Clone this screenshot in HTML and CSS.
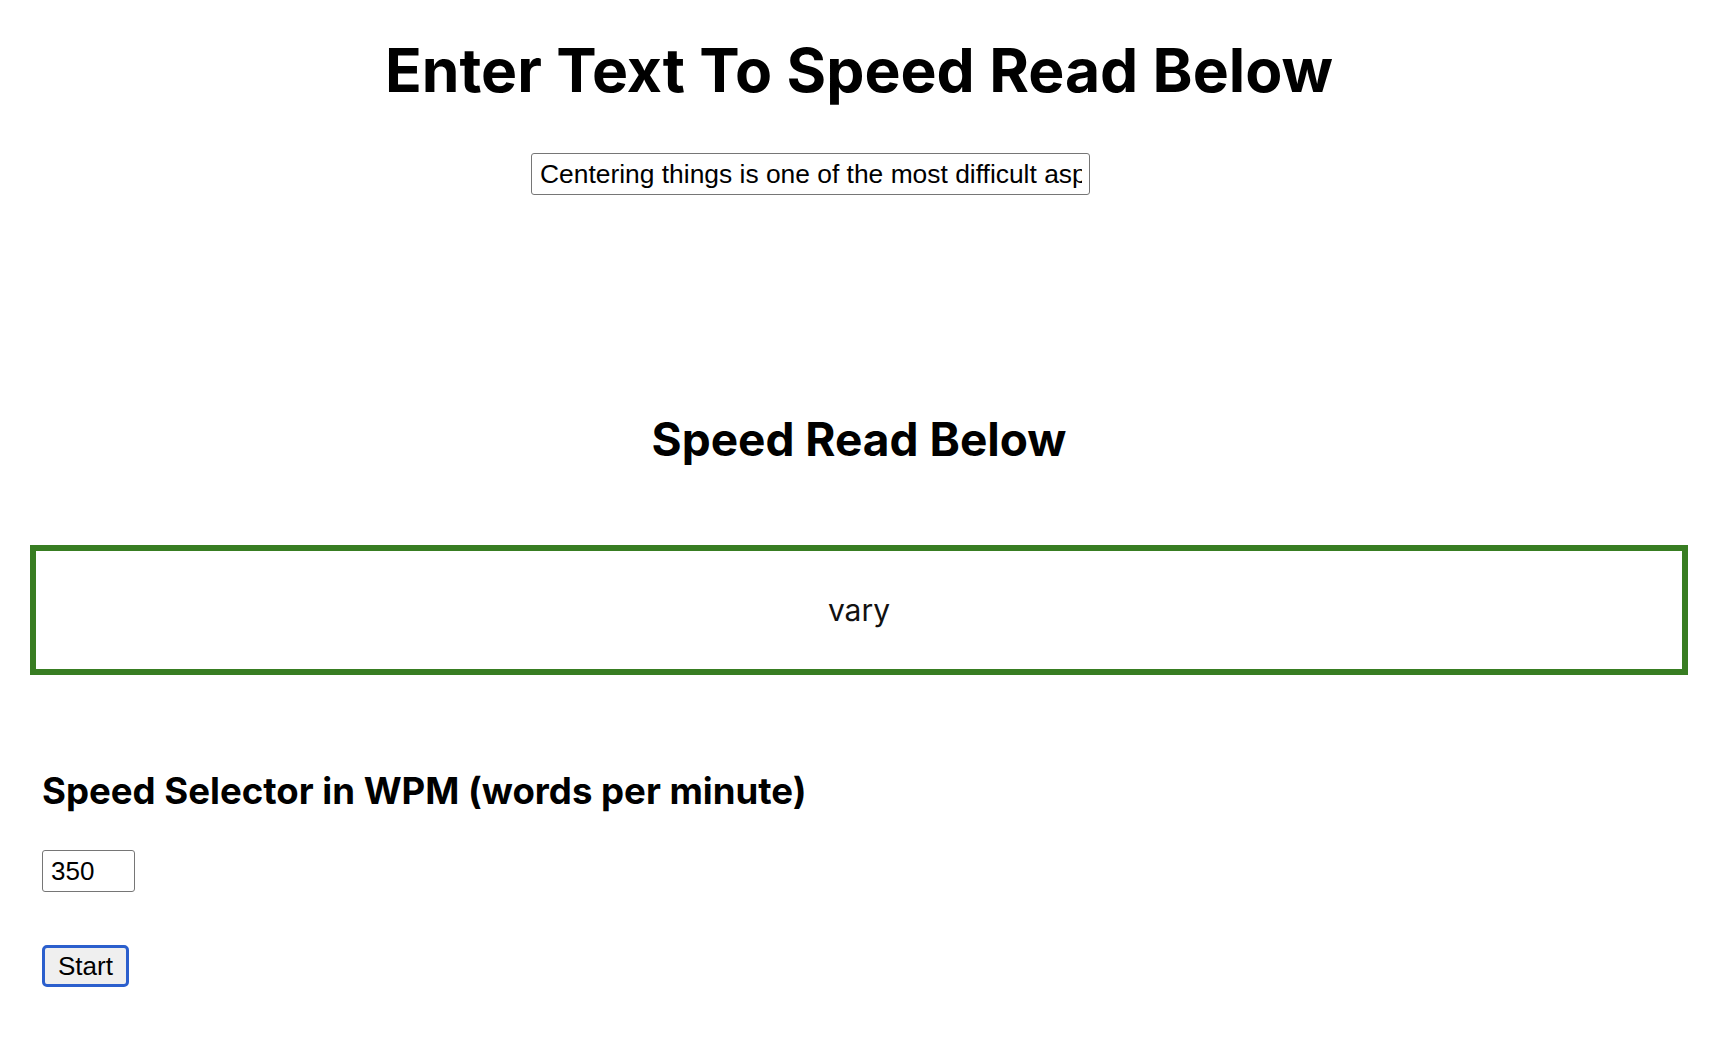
FILE: index.html
```html
<!DOCTYPE html>
<html lang="en">
<head>
<meta charset="utf-8">
<title>Speed Reader</title>
<link rel="stylesheet" href="styles.css">
</head>
<body>
<main class="page">
  <h1 class="title">Enter Text To Speed Read Below</h1>
  <div class="text-row">
    <input class="text-input" type="text" value="Centering things is one of the most difficult aspects of CSS, and the approach can vary">
  </div>
  <h2 class="subtitle">Speed Read Below</h2>
  <div class="reader"><span class="word">vary</span></div>
  <section class="controls">
    <h3 class="controls-title">Speed Selector in WPM (words per minute)</h3>
    <input class="wpm-input" type="number" value="350">
    <button class="start-btn" type="button">Start</button>
  </section>
</main>
</body>
</html>
```

FILE: styles.css
```css
html, body {
  margin: 0;
  padding: 0;
  background: #ffffff;
}

body {
  font-family: Inter, "Noto Sans", sans-serif;
  color: #000000;
}

.page {
  display: flex;
  flex-direction: column;
  padding: 0 28px 0 30px;
}

.title {
  margin: 34px 0 0;
  font-size: 60.6px;
  line-height: 73px;
  font-weight: 700;
  text-align: center;
}

.text-row {
  display: flex;
  justify-content: center;
  margin-top: 46px;
}

.text-input {
  width: 559px;
  height: 42px;
  box-sizing: border-box;
  margin: 0 97px 0 0;
  padding: 0 7px 0 8px;
  border: 1px solid #767676;
  border-radius: 3px;
  font-family: "Liberation Sans", Arial, sans-serif;
  font-size: 26.4px;
  color: #000000;
  background: #ffffff;
}

.subtitle {
  margin: 217px 0 0;
  font-size: 46px;
  line-height: 55px;
  font-weight: 700;
  text-align: center;
}

.reader {
  margin-top: 78px;
  height: 130px;
  box-sizing: border-box;
  border: 6px solid #387d22;
  text-align: center;
}

.word {
  display: block;
  font-size: 30px;
  line-height: 118px;
  font-weight: 400;
  color: #111111;
}

.controls {
  display: flex;
  flex-direction: column;
  align-items: flex-start;
  padding-left: 12px;
}

.controls-title {
  margin: 94px 0 0;
  font-size: 36.6px;
  line-height: 44px;
  font-weight: 700;
}

.wpm-input {
  margin-top: 37px;
  width: 93px;
  height: 42px;
  box-sizing: border-box;
  padding: 0 8px;
  border: 1px solid #767676;
  border-radius: 3px;
  font-family: "Liberation Sans", Arial, sans-serif;
  font-size: 26px;
  color: #000000;
  background: #ffffff;
}

.start-btn {
  margin-top: 53px;
  height: 42px;
  box-sizing: border-box;
  padding: 0 13px;
  border: 3px solid #2b5fcd;
  border-radius: 5px;
  background: #efefef;
  font-family: "Liberation Sans", Arial, sans-serif;
  font-size: 26px;
  color: #000000;
  cursor: pointer;
}
```
